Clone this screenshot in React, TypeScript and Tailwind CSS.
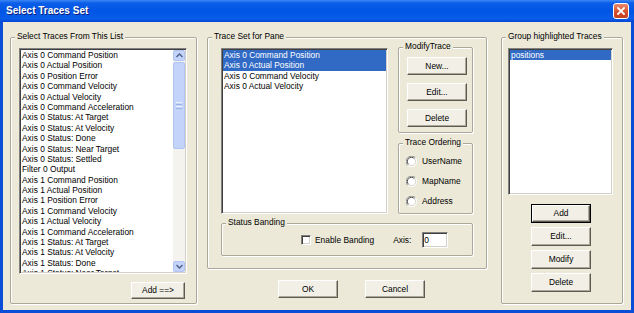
import React from "react";

const leftItems = [
  "Axis 0 Command Position",
  "Axis 0 Actual Position",
  "Axis 0 Position Error",
  "Axis 0 Command Velocity",
  "Axis 0 Actual Velocity",
  "Axis 0 Command Acceleration",
  "Axis 0 Status: At Target",
  "Axis 0 Status: At Velocity",
  "Axis 0 Status: Done",
  "Axis 0 Status: Near Target",
  "Axis 0 Status: Settled",
  "Filter 0 Output",
  "Axis 1 Command Position",
  "Axis 1 Actual Position",
  "Axis 1 Position Error",
  "Axis 1 Command Velocity",
  "Axis 1 Actual Velocity",
  "Axis 1 Command Acceleration",
  "Axis 1 Status: At Target",
  "Axis 1 Status: At Velocity",
  "Axis 1 Status: Done",
  "Axis 1 Status: Near Target",
];

const midItems = [
  { t: "Axis 0 Command Position", s: true },
  { t: "Axis 0 Actual Position", s: true },
  { t: "Axis 0 Command Velocity", s: false },
  { t: "Axis 0 Actual Velocity", s: false },
];

function Group({
  label,
  className,
  children,
}: {
  label: string;
  className: string;
  children?: React.ReactNode;
}) {
  return (
    <div
      className={`relative border border-[#ACA899] rounded-[2px] shadow-[inset_1px_1px_0_#fff,1px_1px_0_#fff] ${className}`}
    >
      <span className="absolute left-[4px] top-[-7px] px-[2px] bg-[#ECE9D8] leading-[11px] whitespace-nowrap">
        {label}
      </span>
      {children}
    </div>
  );
}

function Btn({
  children,
  className,
}: {
  children: React.ReactNode;
  className: string;
}) {
  return (
    <div
      className={`flex items-center justify-center bg-[#F1EFE6] border border-t-white border-l-white border-r-[#5E5C52] border-b-[#5E5C52] shadow-[inset_-1px_-1px_0_#ACA899] leading-none ${className}`}
    >
      {children}
    </div>
  );
}

function Radio({ label }: { label: string }) {
  return (
    <div className="flex items-center h-[20px] gap-[5px]">
      <svg width="11" height="11" viewBox="0 0 12 12">
        <circle cx="6" cy="6" r="5.5" fill="#fff" />
        <path d="M1.76 10.24 A6 6 0 0 1 10.24 1.76" stroke="#808080" strokeWidth="1" fill="none" />
        <path d="M2.8 9.2 A4.5 4.5 0 0 1 9.2 2.8" stroke="#404040" strokeWidth="1" fill="none" />
        <path d="M1.76 10.24 A6 6 0 0 0 10.24 1.76" stroke="#ffffff" strokeWidth="1" fill="none" />
        <path d="M2.8 9.2 A4.5 4.5 0 0 0 9.2 2.8" stroke="#D4D0C8" strokeWidth="1" fill="none" />
      </svg>
      <span>{label}</span>
    </div>
  );
}

function ScrollBar() {
  return (
    <div className="w-[12px] flex flex-col bg-[#F4F3EE]">
      <div className="h-[11px] bg-[#C3D3FA] border border-[#B2C5F2] rounded-[2px] flex items-center justify-center">
        <svg width="7" height="5" viewBox="0 0 7 5">
          <path d="M0.5 4 L3.5 1 L6.5 4" stroke="#4D6185" strokeWidth="1.4" fill="none" />
        </svg>
      </div>
      <div className="flex-1 flex flex-col pt-[1px]">
        <div className="h-[87px] bg-[#C3D3FA] border border-[#B2C5F2] rounded-[2px] flex flex-col items-center justify-center gap-[1px]">
          <div className="w-[6px] h-[1px] bg-[#EEF3FF]" />
          <div className="w-[6px] h-[1px] bg-[#9CB3E8]" />
          <div className="w-[6px] h-[1px] bg-[#EEF3FF]" />
          <div className="w-[6px] h-[1px] bg-[#9CB3E8]" />
        </div>
      </div>
      <div className="h-[11px] bg-[#C3D3FA] border border-[#B2C5F2] rounded-[2px] flex items-center justify-center">
        <svg width="7" height="5" viewBox="0 0 7 5">
          <path d="M0.5 1 L3.5 4 L6.5 1" stroke="#4D6185" strokeWidth="1.4" fill="none" />
        </svg>
      </div>
    </div>
  );
}

const sunken =
  "border border-t-[#808080] border-l-[#808080] border-r-white border-b-white shadow-[inset_1px_1px_0_#404040,inset_-1px_-1px_0_#D4D0C8] p-[1px] bg-white";

export default function App() {
  return (
    <div className="w-[634px] h-[313px] flex flex-col bg-[#0A4ED8] font-['Liberation_Sans',Arial,sans-serif] text-[8.4px] text-black overflow-hidden">
      {/* Title bar */}
      <div className="h-[22px] flex items-center justify-between pl-[6px] pr-[5px] bg-[linear-gradient(to_bottom,#3B86F5_0%,#0C5EE8_14%,#0055E5_50%,#0A5DEA_85%,#0047D3_100%)]">
        <span className="text-white font-bold text-[10px] leading-none [text-shadow:1px_1px_0_#0A1E7A]">
          Select Traces Set
        </span>
        <div className="w-[16px] h-[16px] rounded-[3px] border border-white bg-[linear-gradient(to_bottom,#EA8A6C,#D6502E_55%,#C2401E)] flex items-center justify-center">
          <svg width="8" height="8" viewBox="0 0 8 8">
            <path d="M1 1 L7 7 M7 1 L1 7" stroke="#fff" strokeWidth="1.8" strokeLinecap="square" />
          </svg>
        </div>
      </div>

      {/* Body */}
      <div className="flex-1 mx-[3px] mb-[3px] bg-[#ECE9D8] flex items-start pt-[15px] pl-[7px]">
        {/* Left group */}
        <Group label="Select Traces From This List" className="w-[187px] h-[267px] pt-[10px] pl-[8px] flex flex-col">
          <div className={`w-[168px] h-[226px] flex overflow-hidden ${sunken}`}>
            <div className="flex-1 overflow-hidden pl-[1px]">
              {leftItems.map((t) => (
                <div key={t} className="h-[10.4px] leading-[10.4px] whitespace-nowrap">
                  {t}
                </div>
              ))}
            </div>
            <ScrollBar />
          </div>
          <div className="flex justify-end w-[168px] pr-[2px] mt-[8px]">
            <Btn className="w-[54px] h-[17px]">Add ==&gt;</Btn>
          </div>
        </Group>

        {/* Middle column */}
        <div className="ml-[10px] w-[280px] flex flex-col">
          <Group label="Trace Set for Pane" className="w-[280px] h-[232px] pt-[9px] pl-[13px] flex flex-col">
            <div className="flex items-start">
              <div className={`mt-[1px] w-[167px] h-[166px] overflow-hidden ${sunken}`}>
                {midItems.map((it) => (
                  <div
                    key={it.t}
                    className={`h-[10.4px] leading-[10.4px] whitespace-nowrap pl-[1px] ${
                      it.s ? "bg-[#316AC5] text-white" : ""
                    }`}
                  >
                    {it.t}
                  </div>
                ))}
              </div>
              <div className="ml-[10px] w-[75px] flex flex-col gap-[10px]">
                <Group label="ModifyTrace" className="w-[75px] h-[86px] pt-[9px] pl-[8px] flex flex-col gap-[8px]">
                  <Btn className="w-[60px] h-[18px]">New...</Btn>
                  <Btn className="w-[60px] h-[18px]">Edit...</Btn>
                  <Btn className="w-[60px] h-[18px]">Delete</Btn>
                </Group>
                <Group label="Trace Ordering" className="w-[75px] h-[71px] pt-[7px] pl-[7px] flex flex-col">
                  <Radio label="UserName" />
                  <Radio label="MapName" />
                  <Radio label="Address" />
                </Group>
              </div>
            </div>
            <Group label="Status Banding" className="mt-[9px] w-[252px] h-[33px] pl-[79px] pt-[1px] flex items-center">
              <div className="w-[10px] h-[10px] bg-white border border-t-[#808080] border-l-[#808080] border-r-white border-b-white shadow-[inset_1px_1px_0_#404040,inset_-1px_-1px_0_#D4D0C8]" />
              <span className="ml-[4px] whitespace-nowrap">Enable Banding</span>
              <span className="ml-[19px]">Axis:</span>
              <div className={`ml-[11px] w-[26px] h-[16px] flex items-center pl-[1px] ${sunken}`}>0</div>
            </Group>
          </Group>
          <div className="flex mt-[11px] pl-[71px] gap-[27px]">
            <Btn className="w-[60px] h-[18px]">OK</Btn>
            <Btn className="w-[60px] h-[18px]">Cancel</Btn>
          </div>
        </div>

        {/* Right group */}
        <Group label="Group highlighted Traces" className="ml-[14px] w-[122px] h-[267px] pt-[10px] pl-[6px] flex flex-col">
          <div className={`w-[105px] h-[147px] overflow-hidden ${sunken}`}>
            <div className="h-[10.4px] leading-[10.4px] pl-[1px] bg-[#316AC5] text-white">positions</div>
          </div>
          <div className="mt-[9px] flex flex-col gap-[4px] pl-[23px]">
            <div className="w-[60px] h-[19px] border border-black">
              <Btn className="w-full h-full">Add</Btn>
            </div>
            <Btn className="w-[60px] h-[19px]">Edit...</Btn>
            <Btn className="w-[60px] h-[19px]">Modify</Btn>
            <Btn className="w-[60px] h-[19px]">Delete</Btn>
          </div>
        </Group>
      </div>
    </div>
  );
}
